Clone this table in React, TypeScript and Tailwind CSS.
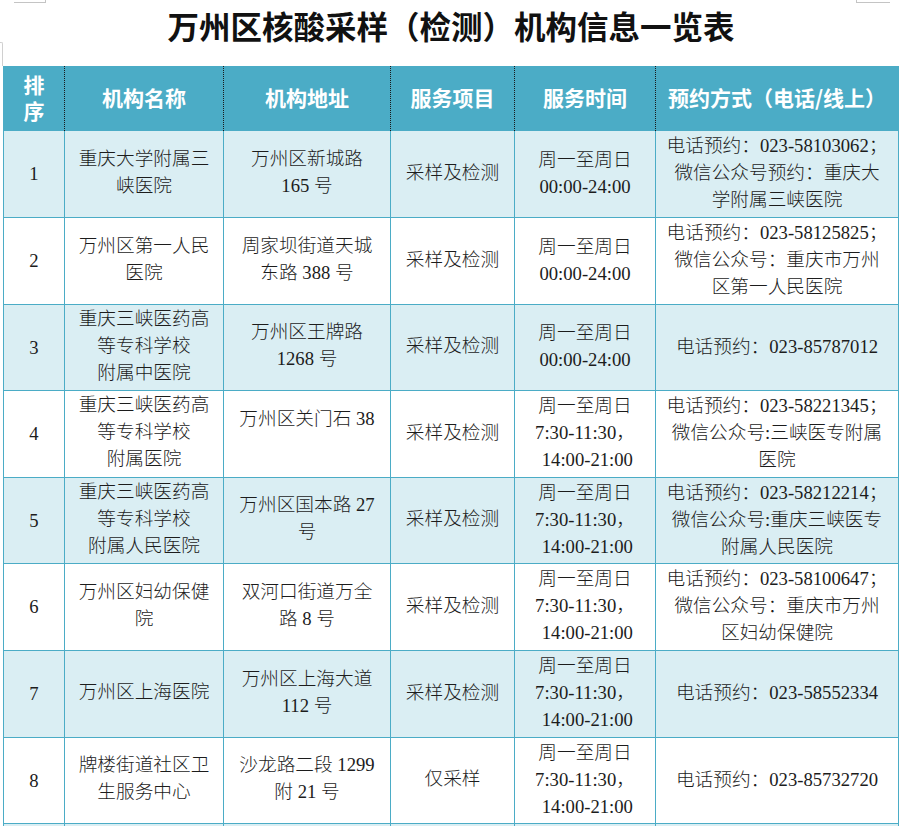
import React from "react";

type Row = {
  n: string;
  name: string[];
  addr: string[];
  svc: string;
  time: string[];
  contact: string[];
  h: string;
  bg: string;
};

const T1 = ["周一至周日", "00:00-24:00"];
const T2 = ["周一至周日", "7:30-11:30，", "\u00a014:00-21:00"];

const rows: Row[] = [
  { n: "1", name: ["重庆大学附属三", "峡医院"], addr: ["万州区新城路", "165 号"], svc: "采样及检测", time: T1, contact: ["电话预约：023-58103062；", "微信公众号预约：重庆大", "学附属三峡医院"], h: "h-[87px]", bg: "bg-[#daeef3]" },
  { n: "2", name: ["万州区第一人民", "医院"], addr: ["周家坝街道天城", "东路 388 号"], svc: "采样及检测", time: T1, contact: ["电话预约：023-58125825；", "微信公众号：重庆市万州", "区第一人民医院"], h: "h-[87px]", bg: "bg-white" },
  { n: "3", name: ["重庆三峡医药高", "等专科学校", "附属中医院"], addr: ["万州区王牌路", "1268 号"], svc: "采样及检测", time: T1, contact: ["电话预约：023-85787012"], h: "h-[86px]", bg: "bg-[#daeef3]" },
  { n: "4", name: ["重庆三峡医药高", "等专科学校", "附属医院"], addr: ["万州区关门石 38", "\u00a0"], svc: "采样及检测", time: T2, contact: ["电话预约：023-58221345；", "微信公众号:三峡医专附属", "医院"], h: "h-[87px]", bg: "bg-white" },
  { n: "5", name: ["重庆三峡医药高", "等专科学校", "附属人民医院"], addr: ["万州区国本路 27", "号"], svc: "采样及检测", time: T2, contact: ["电话预约：023-58212214；", "微信公众号:重庆三峡医专", "附属人民医院"], h: "h-[86px]", bg: "bg-[#daeef3]" },
  { n: "6", name: ["万州区妇幼保健", "院"], addr: ["双河口街道万全", "路 8 号"], svc: "采样及检测", time: T2, contact: ["电话预约：023-58100647；", "微信公众号：重庆市万州", "区妇幼保健院"], h: "h-[87px]", bg: "bg-white" },
  { n: "7", name: ["万州区上海医院"], addr: ["万州区上海大道", "112 号"], svc: "采样及检测", time: T2, contact: ["电话预约：023-58552334"], h: "h-[87px]", bg: "bg-[#daeef3]" },
  { n: "8", name: ["牌楼街道社区卫", "生服务中心"], addr: ["沙龙路二段 1299", "附 21 号"], svc: "仅采样", time: T2, contact: ["电话预约：023-85732720"], h: "h-[86px]", bg: "bg-white" },
  { n: "", name: [], addr: [], svc: "", time: [], contact: [], h: "h-[87px]", bg: "bg-[#daeef3]" },
];

const widths = ["w-[61px]", "w-[159px]", "w-[167px]", "w-[124px]", "w-[141px]", "w-[243px]"];

function Lines({ lines }: { lines: string[] }) {
  return (
    <div className="flex flex-col items-center leading-[27px]">
      {lines.map((l, i) => (
        <div key={i} className="whitespace-pre">{l}</div>
      ))}
    </div>
  );
}

const headers = [["排", "序"], ["机构名称"], ["机构地址"], ["服务项目"], ["服务时间"], ["预约方式（电话/线上）"]];

export default function App() {
  return (
    <div className="relative h-[826px] w-[902px] overflow-hidden bg-white">
      {/* page corner marks */}
      <div className="absolute left-[14px] top-0 h-[3px] w-[32px] border-b border-r border-[#c4c4c4]" />
      <div className="absolute left-0 top-[42px] h-[24px] w-[3px] rounded-tr-[2px] border-r border-t border-[#d0d0d0]" />
      <div className="absolute left-[856px] top-0 h-[3px] w-[34px] border-b border-l border-[#c4c4c4]" />

      <div className="flex h-[66px] items-start justify-center pt-[5px]">
        <h1
          className="text-[31.5px] font-bold leading-[40px] text-[#111]"
          style={{ fontFamily: '"Noto Sans CJK SC", "Noto Sans CJK JP", serif' }}
        >
          万州区核酸采样（检测）机构信息一览表
        </h1>
      </div>

      <div className="ml-[3px] w-[896px] border-l border-[#4bacc6]">
        {/* header */}
        <div
          className="flex h-[65px] bg-[#4bacc6] text-white font-bold text-[21px]"
          style={{ fontFamily: '"Noto Sans CJK SC", "Liberation Sans", sans-serif' }}
        >
          {headers.map((h, i) => (
            <div
              key={i}
              className={`${widths[i]} flex shrink-0 items-center justify-center ${i < 5 ? "border-r border-dotted border-r-[#1a1a1a]" : "border-r border-[#4bacc6]"}`}
            >
              <div className="flex flex-col items-center gap-[2px] pb-[4px]">
                {h.map((t, j) => (
                  <div key={j} className="leading-[24px]">{t}</div>
                ))}
              </div>
            </div>
          ))}
        </div>

        {rows.map((r, ri) => (
          <div
            key={ri}
            className={`flex ${r.h} ${r.bg} border-b border-[#4bacc6] text-[18.67px] text-[#1c1c1c]`}
            style={{ fontFamily: '"Liberation Serif", "Noto Sans CJK SC", serif', fontWeight: 300 }}
          >
            <div className={`${widths[0]} flex shrink-0 items-center justify-center border-r border-[#4bacc6]`}>
              <span>{r.n}</span>
            </div>
            <div className={`${widths[1]} flex shrink-0 items-center justify-center border-r border-[#4bacc6] pb-[5px]`}>
              <Lines lines={r.name} />
            </div>
            <div className={`${widths[2]} flex shrink-0 items-center justify-center border-r border-[#4bacc6] pb-[5px]`}>
              <Lines lines={r.addr} />
            </div>
            <div className={`${widths[3]} flex shrink-0 items-center justify-center border-r border-[#4bacc6] pb-[3px]`}>
              <span>{r.svc}</span>
            </div>
            <div className={`${widths[4]} flex shrink-0 items-center justify-center border-r border-[#4bacc6] pb-[3px]`}>
              <Lines lines={r.time} />
            </div>
            <div className={`${widths[5]} flex shrink-0 items-center justify-center border-r border-[#4bacc6] pb-[3px]`}>
              <Lines lines={r.contact} />
            </div>
          </div>
        ))}
      </div>
    </div>
  );
}
